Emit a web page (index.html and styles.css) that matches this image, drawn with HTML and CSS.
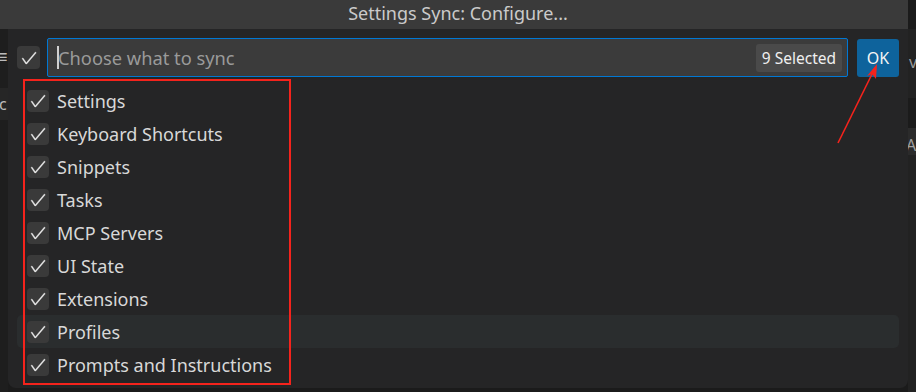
FILE: index.html
```html
<!DOCTYPE html>
<html lang="en">
<head>
  <meta charset="UTF-8">
  <title>Settings Sync: Configure...</title>
  <link rel="stylesheet" href="styles.css">
</head>
<body>
  <div class="title">Settings Sync: Configure...</div>

  <div class="main">
    <div class="side side-left">
      <span class="side-icon">&#8801;</span>
      <div class="side-band"><span>c</span></div>
    </div>

    <div class="picker">
      <div class="header">
        <span class="check check-lg">
          <svg viewBox="0 0 16 16"><path d="M14.431 3.323l-8.47 10-.79-.036-3.35-4.77.818-.574 2.978 4.24 8.051-9.506.764.646z"/></svg>
        </span>
        <div class="search">
          <span class="caret"></span>
          <span class="placeholder">Choose what to sync</span>
          <span class="count">9 Selected</span>
        </div>
        <button type="button" class="ok">OK</button>
      </div>

      <ul class="items">
        <li class="item"><span class="check"><svg viewBox="0 0 16 16"><path d="M14.431 3.323l-8.47 10-.79-.036-3.35-4.77.818-.574 2.978 4.24 8.051-9.506.764.646z"/></svg></span>Settings</li>
        <li class="item"><span class="check"><svg viewBox="0 0 16 16"><path d="M14.431 3.323l-8.47 10-.79-.036-3.35-4.77.818-.574 2.978 4.24 8.051-9.506.764.646z"/></svg></span>Keyboard Shortcuts</li>
        <li class="item"><span class="check"><svg viewBox="0 0 16 16"><path d="M14.431 3.323l-8.47 10-.79-.036-3.35-4.77.818-.574 2.978 4.24 8.051-9.506.764.646z"/></svg></span>Snippets</li>
        <li class="item"><span class="check"><svg viewBox="0 0 16 16"><path d="M14.431 3.323l-8.47 10-.79-.036-3.35-4.77.818-.574 2.978 4.24 8.051-9.506.764.646z"/></svg></span>Tasks</li>
        <li class="item"><span class="check"><svg viewBox="0 0 16 16"><path d="M14.431 3.323l-8.47 10-.79-.036-3.35-4.77.818-.574 2.978 4.24 8.051-9.506.764.646z"/></svg></span>MCP Servers</li>
        <li class="item"><span class="check"><svg viewBox="0 0 16 16"><path d="M14.431 3.323l-8.47 10-.79-.036-3.35-4.77.818-.574 2.978 4.24 8.051-9.506.764.646z"/></svg></span>UI State</li>
        <li class="item"><span class="check"><svg viewBox="0 0 16 16"><path d="M14.431 3.323l-8.47 10-.79-.036-3.35-4.77.818-.574 2.978 4.24 8.051-9.506.764.646z"/></svg></span>Extensions</li>
        <li class="item hover"><span class="check"><svg viewBox="0 0 16 16"><path d="M14.431 3.323l-8.47 10-.79-.036-3.35-4.77.818-.574 2.978 4.24 8.051-9.506.764.646z"/></svg></span>Profiles</li>
        <li class="item"><span class="check"><svg viewBox="0 0 16 16"><path d="M14.431 3.323l-8.47 10-.79-.036-3.35-4.77.818-.574 2.978 4.24 8.051-9.506.764.646z"/></svg></span>Prompts and Instructions</li>
      </ul>
    </div>

    <div class="side side-right">
      <span class="side-v">v</span>
      <div class="side-dark"></div>
      <div class="side-band"><span>Aa</span></div>
    </div>
  </div>

  <!-- annotation drawn over the screenshot -->
  <div class="mark-box"></div>
  <svg class="mark-arrow" width="916" height="392" viewBox="0 0 916 392">
    <line x1="838" y1="143" x2="874" y2="70" stroke="#f5231c" stroke-width="1.6"/>
    <path d="M877 64 L867 76 L872 74 L876 79 Z" fill="#f5231c"/>
  </svg>
</body>
</html>
```

FILE: styles.css
```css
body {
  margin: 0;
  width: 916px;
  height: 392px;
  overflow: hidden;
  background-color: #1b1b1b;
  font-family: 'Noto Sans', 'Open Sans', sans-serif;
  color: #cccccc;
  position: relative;
}

.title {
  width: 908px;
  height: 29px;
  background-color: #3a3a3a;
  color: #cacaca;
  font-size: 18px;
  line-height: 27px;
  text-align: center;
  padding-left: 8px;
  box-sizing: border-box;
}

.main {
  display: flex;
  height: 363px;
}

.side {
  width: 8px;
  overflow: hidden;
  position: relative;
  font-size: 16px;
  color: #bbbbbb;
  white-space: nowrap;
}

.side-left {
  background-color: #1e1e1e;
}

.side-icon {
  display: block;
  margin-top: 15px;
  margin-left: -3px;
  font-size: 18px;
  line-height: 24px;
}

.side-left .side-band {
  margin-top: 20px;
  height: 32px;
  background-color: #262626;
  line-height: 32px;
  margin-left: -1px;
}

.side-right {
  background-color: #222222;
}

.side-v {
  display: block;
  margin-top: 22px;
  margin-left: 1px;
  line-height: 22px;
  color: #9a9a9a;
}

.side-dark {
  height: 30px;
  margin-top: 25px;
  background-color: #1b1b1b;
}

.side-right .side-band {
  height: 27px;
  background-color: #2b2b2b;
  line-height: 34px;
  margin-left: -2px;
  color: #a0a0a0;
}

.picker {
  width: 900px;
  background-color: #252526;
  border-radius: 0 0 8px 8px;
  height: 359px;
  box-sizing: border-box;
  padding: 9px 9px 0 9px;
}

.header {
  display: flex;
  align-items: center;
  gap: 7px;
}

.check {
  width: 22px;
  height: 22px;
  border-radius: 4px;
  background-color: #3a3a3a;
  display: flex;
  align-items: center;
  justify-content: center;
  flex-shrink: 0;
}

.check svg {
  width: 18px;
  height: 18px;
  fill: #ececec;
  stroke: #ececec;
  stroke-width: 0.35;
}

.check-lg {
  width: 23px;
  height: 23px;
}

.search {
  width: 801px;
  height: 39px;
  box-sizing: border-box;
  border: 1px solid #0078d4;
  border-radius: 2px;
  background-color: #3b3b3b;
  display: flex;
  align-items: center;
  padding: 0 5px 0 9px;
}

.caret {
  width: 2px;
  height: 23px;
  background-color: #d0d0d0;
}

.placeholder {
  font-size: 18.3px;
  color: #9a9a9a;
  flex: 1;
  margin-left: -1px;
}

.count {
  background-color: #4a4a4a;
  color: #f0f0f0;
  font-size: 15.5px;
  border-radius: 3px;
  padding: 0 6px;
  height: 28px;
  line-height: 28px;
}

.ok {
  margin-left: 2px;
  width: 42px;
  height: 38px;
  border: none;
  border-radius: 3px;
  background-color: #0e639c;
  color: #f4f4f4;
  font-family: inherit;
  font-size: 16px;
  padding: 0;
}

.items {
  list-style: none;
  margin: 7px 0 0 0;
  padding: 0;
}

.item {
  height: 33px;
  display: flex;
  align-items: center;
  gap: 8px;
  padding-left: 10px;
  font-size: 18px;
  color: #d8d8d8;
  border-radius: 5px;
}

.item.hover {
  background-color: #2a2d2e;
}

.mark-box {
  position: absolute;
  left: 23px;
  top: 79px;
  width: 268px;
  height: 306px;
  border: 2px solid #f5231c;
  box-sizing: border-box;
}

.mark-arrow {
  position: absolute;
  left: 0;
  top: 0;
}
```
